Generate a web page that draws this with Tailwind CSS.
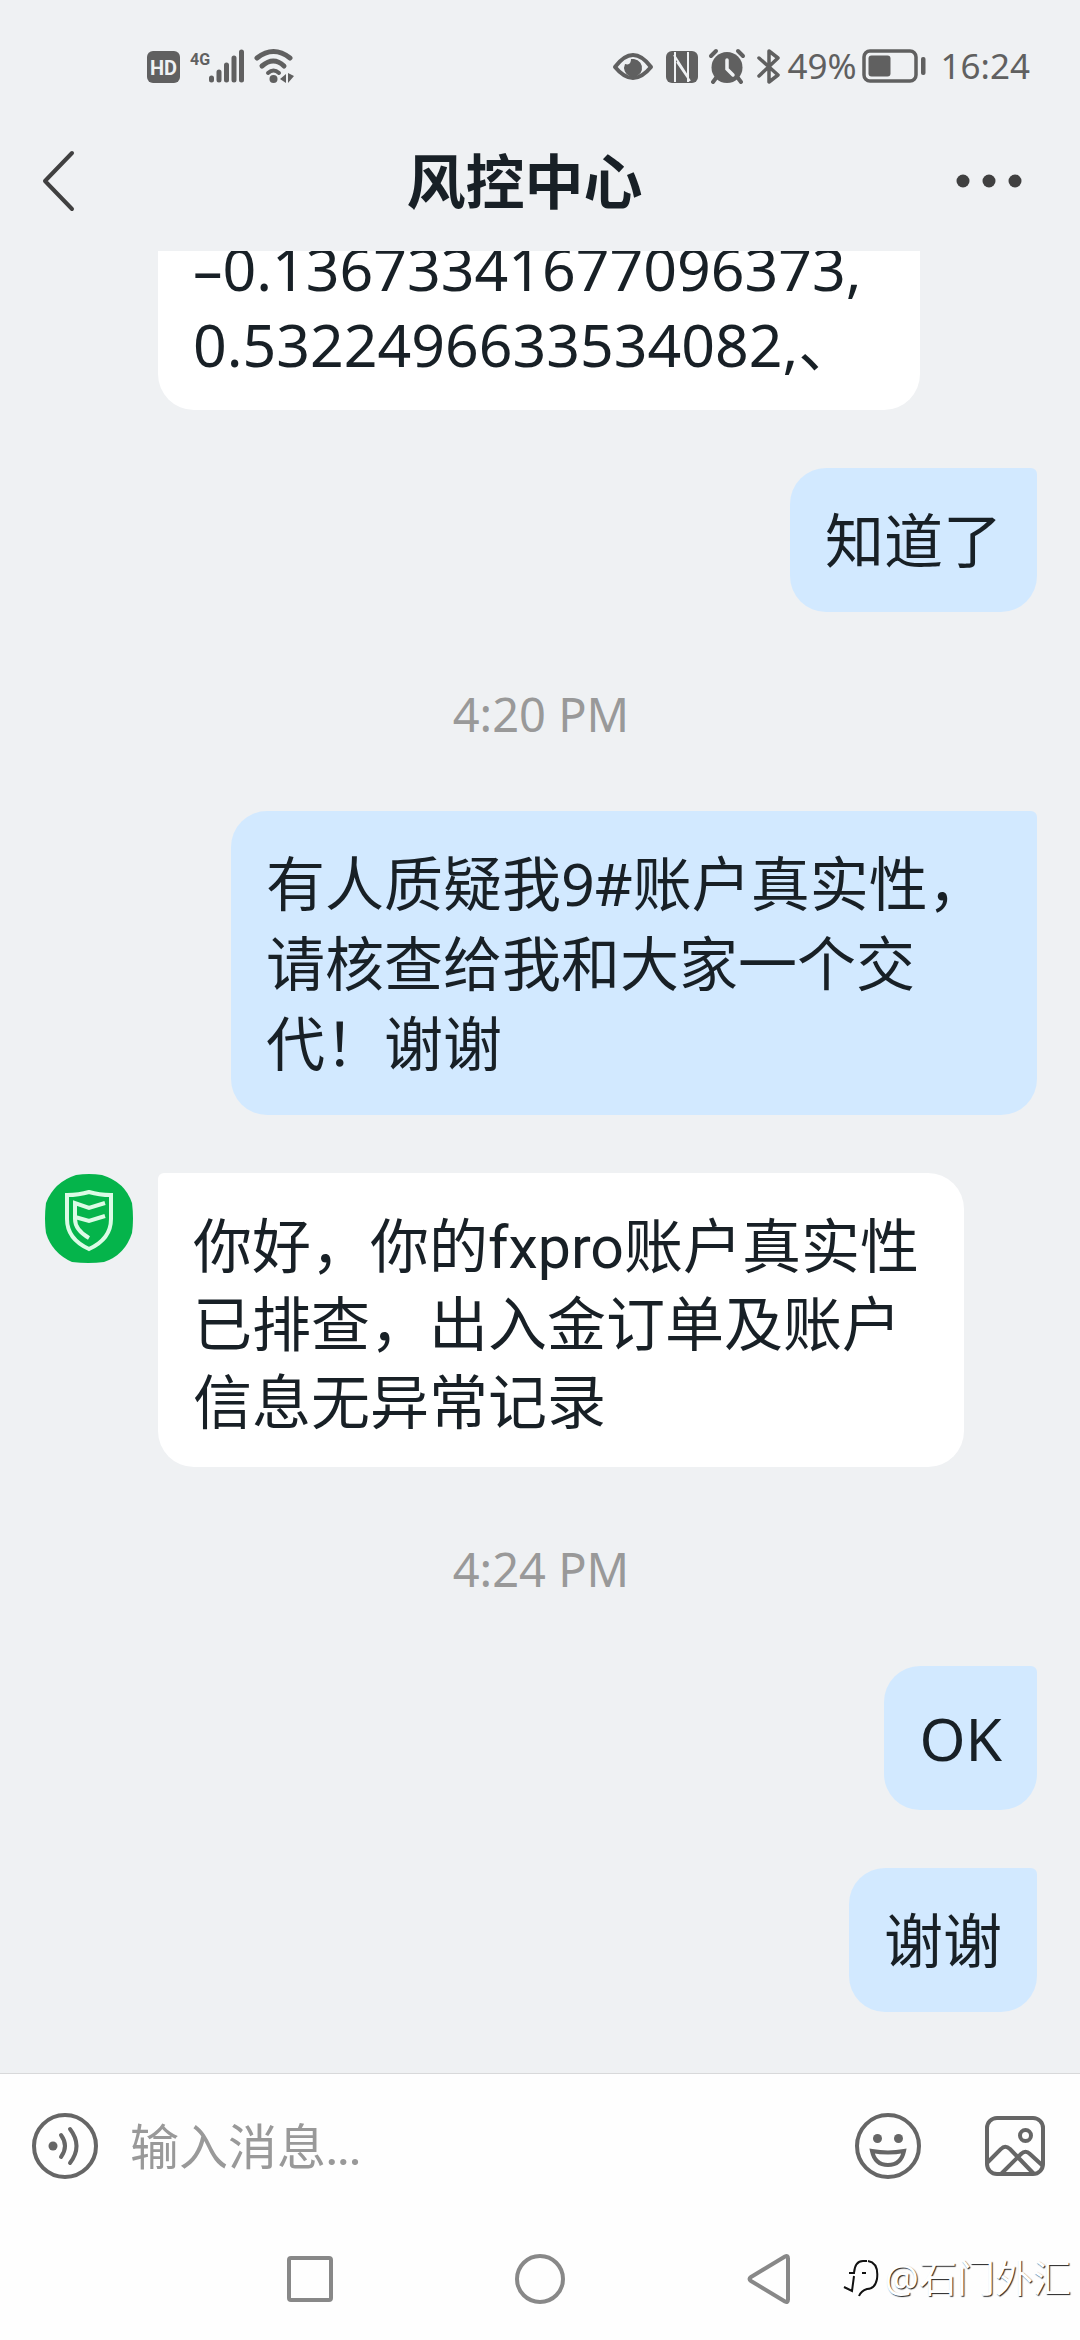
<!DOCTYPE html>
<html lang="zh-CN">
<head>
<meta charset="utf-8">
<meta name="viewport" content="width=device-width, initial-scale=1">
<title>风控中心</title>
<script src="https://cdn.jsdelivr.net/npm/@tailwindcss/browser@4"></script>
</head>
<body class="flex h-screen flex-col bg-[#eff1f3] font-['Noto_Sans','Noto_Sans_CJK_SC',sans-serif] text-[59px] text-[#182026]">

<!-- Status bar -->
<div class="flex h-[132px] shrink-0 items-center justify-between pr-[50px] pl-[146px] text-[#606060]">
  <svg class="h-[36px] w-[152px]" viewBox="0 0 152 36" fill="#606060" role="img" aria-label="4G, Wi-Fi">
    <rect x="1" y="3" width="33" height="32" rx="6"/>
    <text x="17.500" y="27" text-anchor="middle" class="font-[Roboto] text-[20px] font-bold" fill="#eff1f3">HD</text>
    <text x="44" y="17" class="font-[Roboto] text-[16px] font-bold">4G</text>
    <g stroke="#606060" stroke-width="5" stroke-linecap="round" fill="none">
      <path d="M65.500 30v2M73 24v8M80.500 17v15M88 10v22M95.500 4v28"/>
      <path d="M111 10Q127.500-3 144 10" /><path d="M116 18Q127.500 8 138 18"/><path d="M122 25Q127.500 20 133 25" stroke-width="4"/>
    </g>
    <circle cx="127.500" cy="31" r="4"/><path d="M134 31l6-5v9zM142 25v10l6-7z"/>
  </svg>
  <div class="flex items-center gap-[7px]">
    <svg class="h-[36px] w-[170px]" viewBox="0 0 170 36" fill="none" stroke="#606060" role="img" aria-label="NFC, 闹钟, 蓝牙">
      <path d="M4 19Q22-5 40 19Q22 41 4 19Z" stroke-width="4" stroke-linejoin="round"/>
      <path d="M20 11Q20 18 14 16A9 9 0 1 0 23 11Z" fill="#606060" stroke="none"/>
      <rect x="55" y="3" width="32" height="32" rx="6" fill="#606060" stroke="none"/>
      <path d="M64 4v30M63 7L77 29M66 14L79 33M77 4v30" stroke="#eff1f3" stroke-width="2"/>
      <circle cx="116" cy="19.500" r="15.500" fill="#606060" stroke="none"/>
      <path d="M100 8l5-5M132 8l-5-5" stroke-width="4" stroke-linecap="round"/><path d="M105 30l-3 4M127 30l3 4" stroke-width="4" stroke-linecap="round"/>
      <path d="M116 12v9l6 6" stroke="#eff1f3" stroke-width="3.500" stroke-linecap="round"/>
      <path d="M148 10l19 17-9 7V3l9 7-19 18" stroke-width="3.500" stroke-linecap="round" stroke-linejoin="round"/>
    </svg>
    <span class="w-[67px] text-[35px] leading-[36px]">49%</span>
    <svg class="h-[34px] w-[64px]" viewBox="0 0 64 34" fill="none" role="img" aria-label="电量">
      <rect x="2" y="2" width="52" height="30" rx="6" stroke="#606060" stroke-width="3.500"/>
      <rect x="6.500" y="6.500" width="22" height="21" rx="3" fill="#606060"/><rect x="59" y="8" width="4.500" height="18" rx="2" fill="#606060"/>
    </svg>
    <time class="pl-[8px] text-[35px] leading-[36px]">16:24</time>
  </div>
</div>

<!-- Title bar -->
<header class="flex h-[119px] shrink-0 items-center justify-between pr-[58px] pb-[22px] pl-[41px]">
  <button class="block w-[52px]" aria-label="返回">
    <svg class="h-[62px] w-[36px]" viewBox="0 0 36 62" fill="none" stroke="#404040" stroke-width="4" stroke-linecap="round" stroke-linejoin="round"><path d="M31 3L4 31L31 59"/></svg>
  </button>
  <h1 class="text-[59px] leading-[80px] font-bold">风控中心</h1>
  <button class="block" aria-label="更多">
    <svg class="h-[14px] w-[66px]" viewBox="0 0 66 14" fill="#404040"><circle cx="7" cy="7" r="6.500"/><circle cx="33" cy="7" r="6.500"/><circle cx="59" cy="7" r="6.500"/></svg>
  </button>
</header>

<!-- Conversation -->
<main class="flex min-h-0 flex-1 flex-col justify-end overflow-hidden pr-[43px] pb-[61px] pl-[45px]">
  <p class="ml-[113px] w-[762px] max-w-full shrink-0 self-start rounded-[36px] rounded-tl-[6px] bg-white px-[35px] pt-8 pb-7 leading-[76px]">–0.13673341677096373,<br>0.5322496633534082,、</p>
  <p class="mt-[58px] shrink-0 self-end rounded-[36px] rounded-tr-[6px] bg-[#d2e9ff] px-[35px] py-8 leading-[80px]">知道了</p>
  <time class="mt-[72px] mb-[67px] shrink-0 self-center text-[47px] leading-[60px] text-[#999999]">4:20 PM</time>
  <p class="w-[806px] max-w-full shrink-0 self-end rounded-[36px] rounded-tr-[6px] bg-[#d2e9ff] px-[35px] py-8 leading-[80px]">有人质疑我9#账户真实性，<br>请核查给我和大家一个交<br>代！谢谢</p>
  <div class="mt-[58px] flex shrink-0 items-start gap-[25px]">
    <svg class="h-[90px] w-[88px] shrink-0" viewBox="0 0 88 90" fill="none" role="img" aria-label="风控中心">
      <path d="M31 2Q44 0 57 2Q80 9 87 30Q89 46 87 60Q80 82 59 89Q44 91 27 89Q7 80 1 60Q-1 46 1 30Q9 9 31 2Z" fill="#05b44b"/>
      <g stroke="#dcfbe6" stroke-width="4"><path d="M22 22Q34 22 44 19Q54 22 66 22V46Q66 66 44 76Q22 66 22 46Z"/><path d="M60 30L44 35L30 30V46Q30 57 44 65M60 43L44 48L30 44"/></g>
    </svg>
    <p class="w-[806px] rounded-[36px] rounded-tl-[6px] bg-white px-[35px] pt-9 pb-6 font-[Roboto,'Noto_Sans_CJK_SC',sans-serif] leading-[78px]">你好，你的fxpro账户真实性<br>已排查，出入金订单及账户<br>信息无异常记录</p>
  </div>
  <time class="mt-[72px] mb-[67px] shrink-0 self-center text-[47px] leading-[60px] text-[#999999]">4:24 PM</time>
  <p class="shrink-0 self-end rounded-[36px] rounded-tr-[6px] bg-[#d2e9ff] px-[35px] py-8 leading-[80px]">OK</p>
  <p class="mt-[58px] shrink-0 self-end rounded-[36px] rounded-tr-[6px] bg-[#d2e9ff] px-[35px] py-8 leading-[80px]">谢谢</p>
</main>

<!-- Composer -->
<footer class="shrink-0 border-t border-[#d8d9da] bg-[#fefefe]">
  <form class="flex h-[144px] items-center pr-[34px] pl-[31px]">
    <button type="button" aria-label="语音">
      <svg class="size-[68px]" viewBox="0 0 68 68" fill="none" stroke="#666" stroke-width="4" stroke-linecap="round"><circle cx="34" cy="34" r="31"/><circle cx="22" cy="34" r="4.500" fill="#666" stroke="none"/><path d="M30 23Q38 34 30 45M39 17Q52 34 39 51"/></svg>
    </button>
    <input type="text" aria-label="输入消息" placeholder="输入消息..." class="ml-[31px] min-w-0 flex-1 bg-transparent font-[Lato,'Noto_Sans_CJK_SC',sans-serif] text-[49px] leading-[72px] outline-none placeholder:text-[#999999]">
    <button type="button" aria-label="表情">
      <svg class="size-[68px]" viewBox="0 0 68 68" fill="none" stroke="#666" stroke-width="4"><circle cx="34" cy="34" r="31"/><circle cx="23.500" cy="26.500" r="4.500" fill="#666" stroke="none"/><circle cx="44.500" cy="26.500" r="4.500" fill="#666" stroke="none"/><path d="M18 39Q34 42 50 39Q47 53 34 53Q21 53 18 39Z"/></svg>
    </button>
    <button type="button" aria-label="图片" class="ml-[62px]">
      <svg class="size-[62px]" viewBox="0 0 62 62" fill="none" stroke="#666" stroke-width="4"><rect x="3" y="3" width="56" height="56" rx="10"/><circle cx="41.500" cy="20.500" r="5.500"/><path d="M3 48L17 34Q21 29.500 26 34L50 59M17 59L37 39Q41.500 34.500 46 39L59 51"/></svg>
    </button>
  </form>

  <!-- System navigation -->
  <nav class="relative flex h-[122px] items-center justify-center gap-[182px]">
    <button aria-label="最近任务"><svg class="size-[46px]" viewBox="0 0 46 46" fill="none" stroke="#888" stroke-width="4"><rect x="2" y="2" width="42" height="42" rx="2"/></svg></button>
    <button aria-label="主页"><svg class="size-[50px]" viewBox="0 0 50 50" fill="none" stroke="#888" stroke-width="4"><circle cx="25" cy="25" r="23"/></svg></button>
    <button aria-label="返回"><svg class="h-[50px] w-[46px]" viewBox="0 0 46 50" fill="none" stroke="#888" stroke-width="4" stroke-linejoin="round"><path d="M41 4.500Q41 1 38 2.500L4 23Q1 25 4 27L38 47.500Q41 49 41 45.500Z"/></svg></button>
    <div class="absolute right-[9px] bottom-[39px] flex items-center gap-[6px] text-[38px] leading-[48px] text-white [text-shadow:1px_1px_1px_#222]">
      <svg class="h-[40px] w-[36px]" viewBox="0 0 36 40" fill="none" stroke="#111" stroke-width="2"><path d="M6 16H11Q12 4 20 4H24M19 16H23M11 19L9 34L1 30M25 4Q36 6 34 22Q32 32 24 32Q18 34 16 39"/></svg>
      <span>@石门外汇</span>
    </div>
  </nav>
</footer>
</body>
</html>
